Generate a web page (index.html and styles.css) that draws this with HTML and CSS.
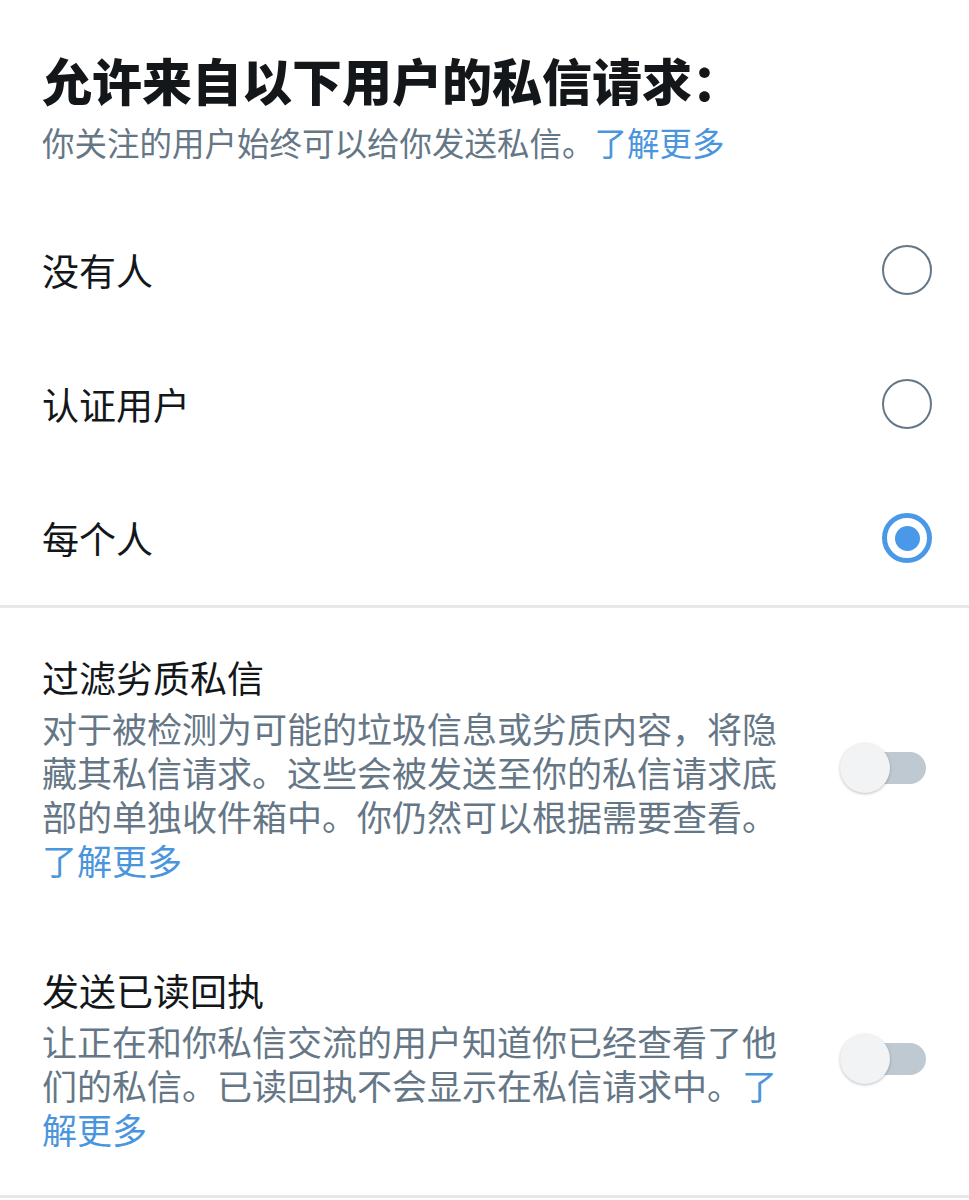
FILE: index.html
```html
<!DOCTYPE html>
<html lang="zh-CN">
<head>
    <meta charset="UTF-8">
    <meta name="viewport" content="width=device-width, initial-scale=1.0">
    <title>私信设置</title>
    <link rel="stylesheet" href="styles.css">
</head>
<body>

    <div class="header">
        <h1>允许来自以下用户的私信请求：</h1>
        <p class="sub">你关注的用户始终可以给你发送私信。<a href="#">了解更多</a></p>
    </div>

    <ul class="options">
        <li class="option">
            <span>没有人</span>
            <span class="radio"></span>
        </li>
        <li class="option">
            <span>认证用户</span>
            <span class="radio"></span>
        </li>
        <li class="option">
            <span>每个人</span>
            <span class="radio checked"></span>
        </li>
    </ul>

    <section class="setting">
        <div class="text">
            <h2>过滤劣质私信</h2>
            <p class="desc">对于被检测为可能的垃圾信息或劣质内容，将隐藏其私信请求。这些会被发送至你的私信请求底部的单独收件箱中。你仍然可以根据需要查看。<a href="#">了解更多</a></p>
        </div>
        <span class="toggle"><span class="track"></span><span class="knob"></span></span>
    </section>

    <section class="setting last">
        <div class="text">
            <h2>发送已读回执</h2>
            <p class="desc">让正在和你私信交流的用户知道你已经查看了他们的私信。已读回执不会显示在私信请求中。<a href="#">了解更多</a></p>
        </div>
        <span class="toggle"><span class="track"></span><span class="knob"></span></span>
    </section>

</body>
</html>
```

FILE: styles.css
```css
body {
    margin: 0;
    font-family: "Noto Sans CJK SC", "Noto Sans", sans-serif;
    background-color: #fff;
    color: #14171a;
}
a {
    color: #4a95dc;
    text-decoration: none;
}
.header {
    padding: 48px 37px 39px 42px;
}
h1 {
    margin: 0;
    font-size: 50px;
    font-weight: 900;
    line-height: 62px;
}
.sub {
    margin: 10px 0 0;
    font-size: 32.5px;
    line-height: 44px;
    color: #657786;
}
.options {
    list-style: none;
    margin: 0;
    padding: 0 37px 0 42px;
    border-bottom: 3px solid #e6e8ea;
}
.option {
    display: flex;
    align-items: center;
    justify-content: space-between;
    height: 134px;
    font-size: 37px;
}
.radio {
    box-sizing: border-box;
    width: 50px;
    height: 50px;
    border: 2.5px solid #657786;
    border-radius: 50%;
    display: flex;
    align-items: center;
    justify-content: center;
}
.radio.checked {
    border: 5px solid #4a99e9;
}
.radio.checked::after {
    content: "";
    width: 25px;
    height: 25px;
    border-radius: 50%;
    background-color: #4a99e9;
}
.setting {
    display: flex;
    align-items: center;
    justify-content: space-between;
    padding: 45px 43px 39px 42px;
}
.setting.last {
    padding-bottom: 44px;
    border-bottom: 3px solid #e6e8ea;
}
.text {
    flex: 0 1 750px;
}
h2 {
    margin: 0;
    font-size: 37px;
    font-weight: normal;
    line-height: 48px;
}
.desc {
    margin: 5px 0 0;
    font-size: 35px;
    line-height: 44px;
    color: #657786;
}
.toggle {
    position: relative;
    flex: none;
    width: 86px;
    height: 50px;
}
.track {
    position: absolute;
    right: 0;
    top: 9px;
    width: 76px;
    height: 32px;
    border-radius: 16px;
    background-color: #bfc9d2;
}
.knob {
    position: absolute;
    left: 0;
    top: 0;
    width: 50px;
    height: 50px;
    border-radius: 50%;
    background-color: #f1f3f4;
    box-shadow: 0 1px 3px rgba(0, 0, 0, 0.25);
}
```
